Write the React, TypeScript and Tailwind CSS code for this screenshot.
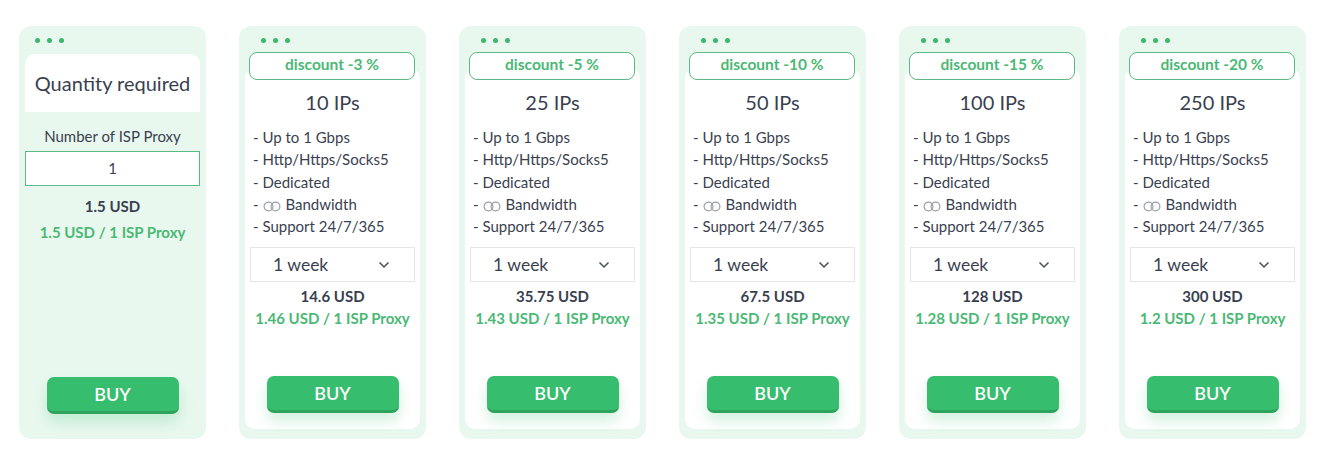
import React from 'react';

const plans = [
  { discount: 'discount -3 %', ips: '10 IPs', total: '14.6 USD', per: '1.46 USD / 1 ISP Proxy' },
  { discount: 'discount -5 %', ips: '25 IPs', total: '35.75 USD', per: '1.43 USD / 1 ISP Proxy' },
  { discount: 'discount -10 %', ips: '50 IPs', total: '67.5 USD', per: '1.35 USD / 1 ISP Proxy' },
  { discount: 'discount -15 %', ips: '100 IPs', total: '128 USD', per: '1.28 USD / 1 ISP Proxy' },
  { discount: 'discount -20 %', ips: '250 IPs', total: '300 USD', per: '1.2 USD / 1 ISP Proxy' },
];

function Dots() {
  return (
    <div className="flex gap-[7px] pl-[16px] pt-[12px] h-[26px]">
      <span className="w-[5px] h-[5px] rounded-full bg-[#3bb76c]" />
      <span className="w-[5px] h-[5px] rounded-full bg-[#3bb76c]" />
      <span className="w-[5px] h-[5px] rounded-full bg-[#3bb76c]" />
    </div>
  );
}

function Infinity() {
  return (
    <svg width="18" height="11" viewBox="0 0 18 11" className="inline-block ml-[1px] mr-[4px] -mb-[1px]">
      <circle cx="5.5" cy="5.5" r="4.4" fill="none" stroke="#9aa0a8" strokeWidth="1.2" />
      <circle cx="12.5" cy="5.5" r="4.4" fill="none" stroke="#9aa0a8" strokeWidth="1.2" />
    </svg>
  );
}

function BuyButton() {
  return (
    <button className="mx-auto w-[132px] h-[37px] rounded-[7px] bg-[#36bd6e] border-b-[3px] border-[#2ea35e] text-white text-[18px] font-semibold shadow-[0_8px_14px_rgba(54,189,110,0.22)]">
      BUY
    </button>
  );
}

function Chevron() {
  return (
    <svg width="12" height="8" viewBox="0 0 12 8">
      <path d="M1.5 1.5 L6 6 L10.5 1.5" fill="none" stroke="#4a4f5e" strokeWidth="1.5" />
    </svg>
  );
}

export default function App() {
  return (
    <div className="min-h-screen bg-white pl-[19px] pt-[26px] text-[#3a3f50]" style={{ fontFamily: 'Lato, "Open Sans", sans-serif' }}>
      <div className="flex gap-[33px]">
        <div className="w-[187px] h-[413px] rounded-[12px] bg-[#e9f8ef] flex flex-col">
          <Dots />
          <div className="mx-[6px] mt-[2px] h-[58px] rounded-t-[10px] bg-white flex items-center justify-center text-[20px] pb-[1px]">
            Quantity required
          </div>
          <div className="text-center text-[15px] mt-[14px] leading-[20px]">Number of ISP Proxy</div>
          <div className="mx-[6px] mt-[5px] h-[35px] border border-[#5db886] bg-white flex items-center justify-center text-[15px]">
            1
          </div>
          <div className="text-center text-[15px] font-bold mt-[10px] leading-[20px]">1.5 USD</div>
          <div className="text-center text-[15px] font-bold text-[#4bb975] mt-[6px] leading-[20px]">1.5 USD / 1 ISP Proxy</div>
          <div className="mt-auto mb-[25px] flex">
            <BuyButton />
          </div>
        </div>

        {plans.map((p) => (
          <div key={p.ips} className="w-[187px] h-[413px] rounded-[12px] bg-[#e9f8ef] flex flex-col px-[6px] pb-[10px]">
            <Dots />
            <div className="relative z-10 ml-[4px] w-[166px] h-[28px] rounded-[8px] border border-[#5db886] bg-white flex items-center justify-center text-[15.5px] font-bold text-[#4bb975] pb-[3px]">
              {p.discount}
            </div>
            <div className="-mt-[12px] flex-1 rounded-[10px] bg-white flex flex-col">
              <div className="text-center text-[20px] mt-[21px] leading-[26px]">{p.ips}</div>
              <ul className="pl-[8px] mt-[11px] text-[15px] leading-[22.3px]">
                <li>- Up to 1 Gbps</li>
                <li>- Http/Https/Socks5</li>
                <li>- Dedicated</li>
                <li>- <Infinity />Bandwidth</li>
                <li>- Support 24/7/365</li>
              </ul>
              <div className="mx-[5px] mt-[10px] h-[35px] border border-[#e6e6e6] flex items-center justify-between pl-[22px] pr-[24px] text-[17.5px]">
                <span>1 week</span>
                <Chevron />
              </div>
              <div className="text-center text-[15px] font-bold mt-[4px] leading-[20px]">{p.total}</div>
              <div className="text-center text-[15px] font-bold text-[#4bb975] mt-[2px] leading-[20px]">{p.per}</div>
              <div className="mt-auto mb-[16px] flex">
                <BuyButton />
              </div>
            </div>
          </div>
        ))}
      </div>
    </div>
  );
}
